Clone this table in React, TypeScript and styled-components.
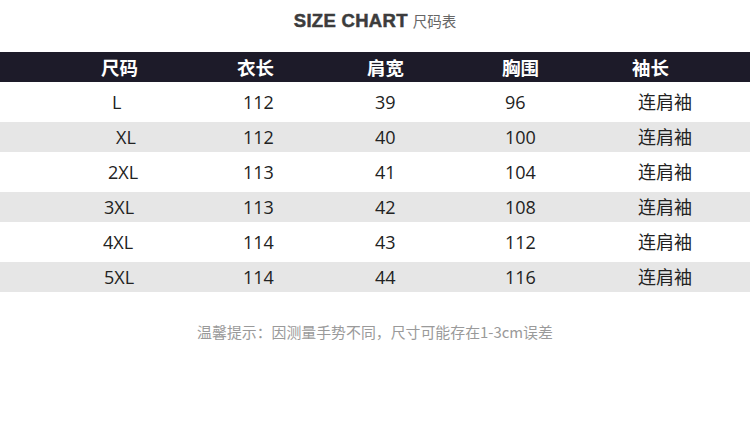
import styled, { createGlobalStyle } from "styled-components";

type SizeRow = {
    size: string;
    offset: number;
    length: string;
    shoulder: string;
    chest: string;
    sleeve: string;
};

const rows: SizeRow[] = [
    { size: 'L', offset: 12, length: '112', shoulder: '39', chest: '96', sleeve: '连肩袖' },
    { size: 'XL', offset: 16, length: '112', shoulder: '40', chest: '100', sleeve: '连肩袖' },
    { size: '2XL', offset: 8, length: '113', shoulder: '41', chest: '104', sleeve: '连肩袖' },
    { size: '3XL', offset: 4, length: '113', shoulder: '42', chest: '108', sleeve: '连肩袖' },
    { size: '4XL', offset: 3, length: '114', shoulder: '43', chest: '112', sleeve: '连肩袖' },
    { size: '5XL', offset: 4, length: '114', shoulder: '44', chest: '116', sleeve: '连肩袖' },
];

const App = () => {
    return (
        <Page>
            <GlobalStyle />
            <TitleBar>
                <TitleEn>SIZE CHART</TitleEn>
                <TitleCn>尺码表</TitleCn>
            </TitleBar>

            {/* table head */}
            <HeadRow>
                <HeadCell $x={1}>尺码</HeadCell>
                <HeadCell $x={0}>衣长</HeadCell>
                <HeadCell $x={4}>肩宽</HeadCell>
                <HeadCell $x={0}>胸围</HeadCell>
                <HeadCell $x={0}>袖长</HeadCell>
            </HeadRow>

            {/* table body */}
            {rows.map((row, index) => (
                <BodyRow key={row.size} $shade={index % 2 === 1}>
                    <Cell $x={row.offset}>{row.size}</Cell>
                    <Cell $x={6}>{row.length}</Cell>
                    <Cell $x={12}>{row.shoulder}</Cell>
                    <Cell $x={3}>{row.chest}</Cell>
                    <Cell $x={6}>{row.sleeve}</Cell>
                </BodyRow>
            ))}

            <Note>温馨提示：因测量手势不同，尺寸可能存在1-3cm误差</Note>
        </Page>
    );
};

const GlobalStyle = createGlobalStyle`
    html, body {
        margin: 0;
        padding: 0;
        background: #ffffff;
    }
    * {
        box-sizing: border-box;
    }
`;

const Page = styled.div`
    width: 750px;
    height: 437px;
    background: #ffffff;
    font-family: "Open Sans", "Noto Sans CJK SC", sans-serif;
    overflow: hidden;
`;

/**************** TITLE *************************/
const TitleBar = styled.div`
    height: 52px;
    display: flex;
    justify-content: center;
    align-items: baseline;
    padding-top: 10px;
    padding-left: 0px;
    gap: 5px;
`;

const TitleEn = styled.div`
    font-family: "Liberation Sans", Arial, sans-serif;
    font-weight: 700;
    font-size: 18.5px;
    color: #3c3c3c;
    letter-spacing: 0.3px;
    -webkit-text-stroke: 0.5px #3c3c3c;
`;

const TitleCn = styled.div`
    font-family: "Noto Sans CJK SC", sans-serif;
    font-size: 14.5px;
    color: #666666;
`;

/**************** TABLE *************************/
const Grid = styled.div`
    display: grid;
    grid-template-columns: 137px 126px 139px 130px 1fr;
    align-items: center;
    padding-left: 100px;
`;

const HeadRow = styled(Grid)`
    height: 30px;
    background: #1d1b29;
`;

const BodyRow = styled(Grid)<{ $shade: boolean }>`
    height: ${p => (p.$shade ? '30px' : '40px')};
    background: ${p => (p.$shade ? '#e6e6e6' : '#ffffff')};
`;

const HeadCell = styled.div<{ $x: number }>`
    margin-left: ${p => p.$x}px;
    font-family: "Noto Sans CJK SC", sans-serif;
    font-weight: 700;
    font-size: 18.5px;
    color: #ffffff;
    line-height: 30px;
`;

const Cell = styled.div<{ $x: number }>`
    margin-left: ${p => p.$x}px;
    font-size: 18px;
    color: #222222;
    line-height: 24px;
`;

/**************** NOTE *************************/
const Note = styled.div`
    margin-top: 29px;
    text-align: center;
    font-family: "Noto Sans CJK SC", sans-serif;
    font-size: 14.9px;
    color: #9a9a9a;
`;

export default App;
